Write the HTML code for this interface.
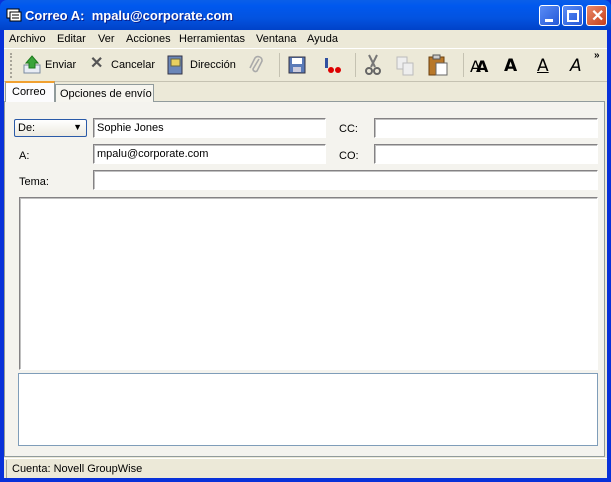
<!DOCTYPE html>
<html><head><meta charset="utf-8"><style>
*{box-sizing:border-box;margin:0;padding:0}
body{width:611px;height:482px;overflow:hidden;background:#0831d9;font-family:"Liberation Sans",sans-serif;font-size:11px;color:#000;position:relative;white-space:nowrap}
.abs{position:absolute}
#title{left:0;top:0;width:611px;height:30px;background:linear-gradient(#0a5fe8,#0058ee 20%,#0353e0 60%,#0042c8);border-radius:7px 7px 0 0}
#title span{position:absolute;left:25px;top:8px;color:#fff;font-weight:bold;font-size:13px;font-family:"Liberation Sans",sans-serif;text-shadow:1px 1px #0a1e8a}
.btn{position:absolute;top:5px;width:21px;height:21px;border:1px solid #fff;border-radius:3px;background:linear-gradient(135deg,#5a8cf5,#2458d8)}
#win{left:4px;top:30px;width:603px;height:448px;background:#ece9d8}
.menu span{position:absolute;top:3px}
.tb{position:absolute;top:29px}
.field{position:absolute;background:#fff;border:1px solid;border-color:#848284 #fff #fff #848284;box-shadow:inset 1px 1px #c0c0c0;padding:3px 3px}
</style></head><body>
<div id="title" class="abs">
<svg class="abs" style="left:6px;top:8px" width="16" height="14"><rect x="1" y="1" width="12" height="9" fill="#fff" stroke="#000"/><rect x="4" y="4" width="11" height="9" fill="#fff" stroke="#000"/><line x1="6" y1="7" x2="13" y2="7" stroke="#000"/><line x1="6" y1="10" x2="13" y2="10" stroke="#000"/></svg>
<span>Correo A:&nbsp; mpalu@corporate.com</span>
<div class="btn" style="left:539px"><div class="abs" style="left:5px;top:13px;width:8px;height:3px;background:#fff"></div></div>
<div class="btn" style="left:562px"><div class="abs" style="left:4px;top:4px;width:12px;height:12px;border:2px solid #fff;border-top-width:3px"></div></div>
<div class="btn" style="left:586px;background:linear-gradient(135deg,#e88a6a,#c8401c)"><span style="left:4px;top:0;font-size:16px;text-shadow:none">✕</span></div>
</div>
<div id="win" class="abs">
<div class="menu">
<span style="left:5px">Archivo</span><span style="left:53px">Editar</span><span style="left:94px">Ver</span><span style="left:122px">Acciones</span><span style="left:175px">Herramientas</span><span style="left:252px">Ventana</span><span style="left:303px">Ayuda</span>
</div>
<div class="abs" style="left:0;top:18px;width:603px;height:1px;background:#fff"></div>
<div class="abs" style="left:6px;top:23px;width:2px;height:25px;border-left:2px dotted #a8a599"></div>
<svg class="abs" style="left:18px;top:25px" width="20" height="20"><rect x="2" y="10" width="16" height="8" fill="#e8ecf4" stroke="#7a8aa0"/><path d="M10 1 L16 8 H13 V13 H7 V8 H4Z" fill="#3aa43a" stroke="#1e7a1e"/></svg>
<span class="tb" style="left:41px">Enviar</span>
<span class="abs" style="left:86px;top:23px;font-size:16px;font-weight:bold;color:#555">✕</span>
<span class="tb" style="left:107px">Cancelar</span>
<svg class="abs" style="left:162px;top:25px" width="18" height="20"><rect x="2" y="1" width="14" height="18" fill="#6a86b8" stroke="#334"/><rect x="5" y="4" width="9" height="7" fill="#e8d060" stroke="#664"/></svg>
<span class="tb" style="left:186px">Dirección</span>
<svg class="abs" style="left:244px;top:25px" width="16" height="20"><path d="M11 4 L5 14 A2.5 2.5 0 0 0 9 16 L14 6 A4 4 0 0 0 7 3 L2 13" fill="none" stroke="#aaa" stroke-width="1.6"/></svg>
<div class="abs" style="left:275px;top:23px;width:1px;height:24px;background:#c5c2b2"></div>
<svg class="abs" style="left:284px;top:26px" width="18" height="18"><rect x="1" y="1" width="16" height="16" fill="#5a7ab8" stroke="#334"/><rect x="4" y="2" width="10" height="6" fill="#fff"/><rect x="5" y="11" width="8" height="5" fill="#ccd"/></svg>
<svg class="abs" style="left:318px;top:26px" width="20" height="18"><path d="M3 2 L6 2 L6 12 L3 12Z" fill="#3050a0"/><circle cx="9" cy="14" r="3" fill="#d00"/><circle cx="16" cy="14" r="3" fill="#d00"/></svg>
<div class="abs" style="left:351px;top:23px;width:1px;height:24px;background:#c5c2b2"></div>
<svg class="abs" style="left:360px;top:24px" width="18" height="22"><path d="M5 1 L11 13 M13 1 L7 13" stroke="#777" stroke-width="2"/><circle cx="5" cy="17" r="3" fill="none" stroke="#666" stroke-width="2"/><circle cx="13" cy="17" r="3" fill="none" stroke="#666" stroke-width="2"/></svg>
<svg class="abs" style="left:392px;top:26px" width="18" height="20"><rect x="1" y="1" width="10" height="12" fill="#eee" stroke="#bbb"/><rect x="7" y="7" width="10" height="12" fill="#eee" stroke="#bbb"/></svg>
<svg class="abs" style="left:424px;top:24px" width="20" height="22"><rect x="1" y="3" width="15" height="18" fill="#b8782a" stroke="#6a4010"/><rect x="5" y="1" width="7" height="4" fill="#ccc" stroke="#555"/><rect x="8" y="9" width="11" height="12" fill="#fff" stroke="#666"/></svg>
<div class="abs" style="left:459px;top:23px;width:1px;height:24px;background:#c5c2b2"></div>
<span class="abs" style="left:466px;top:27px;font-size:16px;font-family:'DejaVu Sans',sans-serif">A<b style="margin-left:-5px">A</b></span>
<span class="abs" style="left:500px;top:26px;font-size:17px;font-weight:bold;font-family:'DejaVu Sans',sans-serif">A</span>
<span class="abs" style="left:533px;top:26px;font-size:17px;text-decoration:underline;font-family:'DejaVu Sans',sans-serif">A</span>
<span class="abs" style="left:566px;top:26px;font-size:17px;font-style:italic;font-family:'DejaVu Sans',sans-serif">A</span>
<span class="abs" style="left:590px;top:20px;font-size:10px;font-weight:bold">»</span>
<div class="abs" style="left:0;top:51px;width:603px;height:1px;background:#c5c2b2"></div>
<div class="abs" style="left:0;top:71px;width:601px;height:356px;border:1px solid #919b9c;background:#f4f3ee"></div>
<div class="abs" style="left:51px;top:54px;width:99px;height:18px;border:1px solid #919b9c;border-bottom:none;background:#f6f5ef;padding:3px 0 0 4px">Opciones de envío</div>
<div class="abs" style="left:1px;top:51px;width:50px;height:21px;border:1px solid #919b9c;border-top:2px solid #f0a030;border-bottom:none;background:#fcfcfe;padding:3px 0 0 6px">Correo</div>
<div class="abs" style="left:10px;top:89px;width:73px;height:18px;border:1px solid #2a5aa8;border-radius:2px;background:linear-gradient(#fff,#eceae0);padding:2px 3px">De:<span style="position:absolute;right:4px;top:2px;font-size:9px">▼</span></div>
<div class="field" style="left:89px;top:88px;width:233px;height:20px">Sophie Jones</div>
<span class="abs" style="left:335px;top:93px">CC:</span>
<div class="field" style="left:370px;top:88px;width:224px;height:20px"></div>
<span class="abs" style="left:15px;top:120px">A:</span>
<div class="field" style="left:89px;top:114px;width:233px;height:20px">mpalu@corporate.com</div>
<span class="abs" style="left:335px;top:120px">CO:</span>
<div class="field" style="left:370px;top:114px;width:224px;height:20px"></div>
<span class="abs" style="left:15px;top:146px">Tema:</span>
<div class="field" style="left:89px;top:140px;width:505px;height:20px"></div>
<div class="field" style="left:15px;top:167px;width:579px;height:173px"></div>
<div class="abs" style="left:14px;top:343px;width:580px;height:73px;border:1px solid #7f9db9;background:#fff"></div>
<div class="abs" style="left:0;top:428px;width:603px;height:1px;background:#fff"></div>
<div class="abs" style="left:2px;top:430px;width:599px;height:18px;border-left:1px solid #a8a599;padding:3px 0 0 5px">Cuenta: Novell GroupWise</div>
</div>
</body></html>
